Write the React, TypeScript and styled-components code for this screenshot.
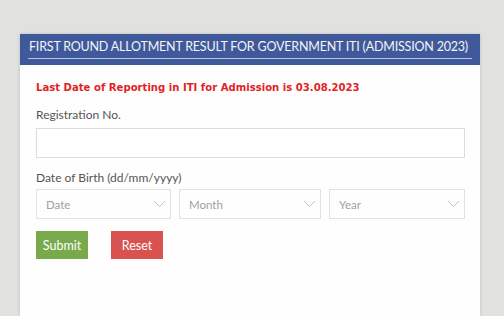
import React from "react";
import styled, { createGlobalStyle } from "styled-components";

const GlobalStyle = createGlobalStyle`
  html, body {
    margin: 0;
    padding: 0;
    background: #ffffff;
    font-family: Lato, "Open Sans", sans-serif;
  }
`;

export default function App() {
  return (
    <>
      <GlobalStyle />
      <Page>
        <Card>
          <Header>
            <HeaderTitle>
              FIRST ROUND ALLOTMENT RESULT FOR GOVERNMENT ITI (ADMISSION 2023)
            </HeaderTitle>
          </Header>
          <Body>
            <Notice>Last Date of Reporting in ITI for Admission is 03.08.2023</Notice>
            <Label $mb={5}>Registration No.</Label>
            <TextInput type="text" />
            <Label $mb={3}>Date of Birth (dd/mm/yyyy)</Label>
            <SelectRow>
              <Select $width={135}>
                <span>Date</span>
                <Chevron />
              </Select>
              <Select $width={142}>
                <span>Month</span>
                <Chevron />
              </Select>
              <Select $width={136}>
                <span>Year</span>
                <Chevron />
              </Select>
            </SelectRow>
            <Buttons>
              <Button $color="#78a94a">Submit</Button>
              <Button $color="#d9524f">Reset</Button>
            </Buttons>
          </Body>
        </Card>
      </Page>
    </>
  );
}

function Chevron() {
  return (
    <svg width="13" height="8" viewBox="0 0 13 8">
      <path d="M1 1 L6.5 6.5 L12 1" fill="none" stroke="#c4c4c4" strokeWidth="1" />
    </svg>
  );
}

const Page = styled.div`
  height: 316px;
  background: #e1e1e0;
  padding: 34px 0 0 20px;
  box-sizing: border-box;
  display: flex;
  overflow: hidden;
`;

const Card = styled.div`
  width: 460px;
  flex: none;
  background: #fefefe;
  box-shadow: 0 0 3px rgba(0, 0, 0, 0.18);
  display: flex;
  flex-direction: column;
`;

const Header = styled.div`
  background: #40599a;
  height: 31px;
  padding: 0 8px 0 8px;
  box-sizing: border-box;
`;

const HeaderTitle = styled.div`
  color: #f2f4f8;
  font-size: 12.5px;
  letter-spacing: -0.2px;
  line-height: 22px;
  padding-top: 2px;
  padding-left: 1px;
  border-bottom: 1px solid #b8c4e0;
  white-space: nowrap;
`;

const Body = styled.div`
  padding: 15px 15px 0 16px;
  display: flex;
  flex-direction: column;
`;

const Notice = styled.div`
  color: #e21f26;
  font-family: "DejaVu Sans", Verdana, sans-serif;
  font-weight: bold;
  font-size: 10.1px;
  line-height: 16px;
  margin-bottom: 11px;
`;

const Label = styled.div<{ $mb: number }>`
  color: #555555;
  font-size: 12px;
  line-height: 16px;
  margin-bottom: ${(p) => p.$mb}px;
`;

const TextInput = styled.input`
  height: 30px;
  box-sizing: border-box;
  border: 1px solid #dcdcdc;
  background: #fff;
  margin: 0 0 12px 0;
  outline: none;
`;

const SelectRow = styled.div`
  display: flex;
  justify-content: space-between;
`;

const Select = styled.div<{ $width: number }>`
  width: ${(p) => p.$width}px;
  height: 30px;
  box-sizing: border-box;
  border: 1px solid #e2e2e2;
  display: flex;
  align-items: center;
  justify-content: space-between;
  padding: 0 4px 0 9px;
  color: #a0a0a0;
  font-size: 11.5px;
`;

const Buttons = styled.div`
  display: flex;
  gap: 23px;
  margin-top: 12px;
`;

const Button = styled.button<{ $color: string }>`
  background: ${(p) => p.$color};
  color: #fff;
  border: none;
  border-radius: 0;
  width: 52px;
  height: 28px;
  padding: 0;
  font-family: Lato, sans-serif;
  font-size: 12.5px;
`;
